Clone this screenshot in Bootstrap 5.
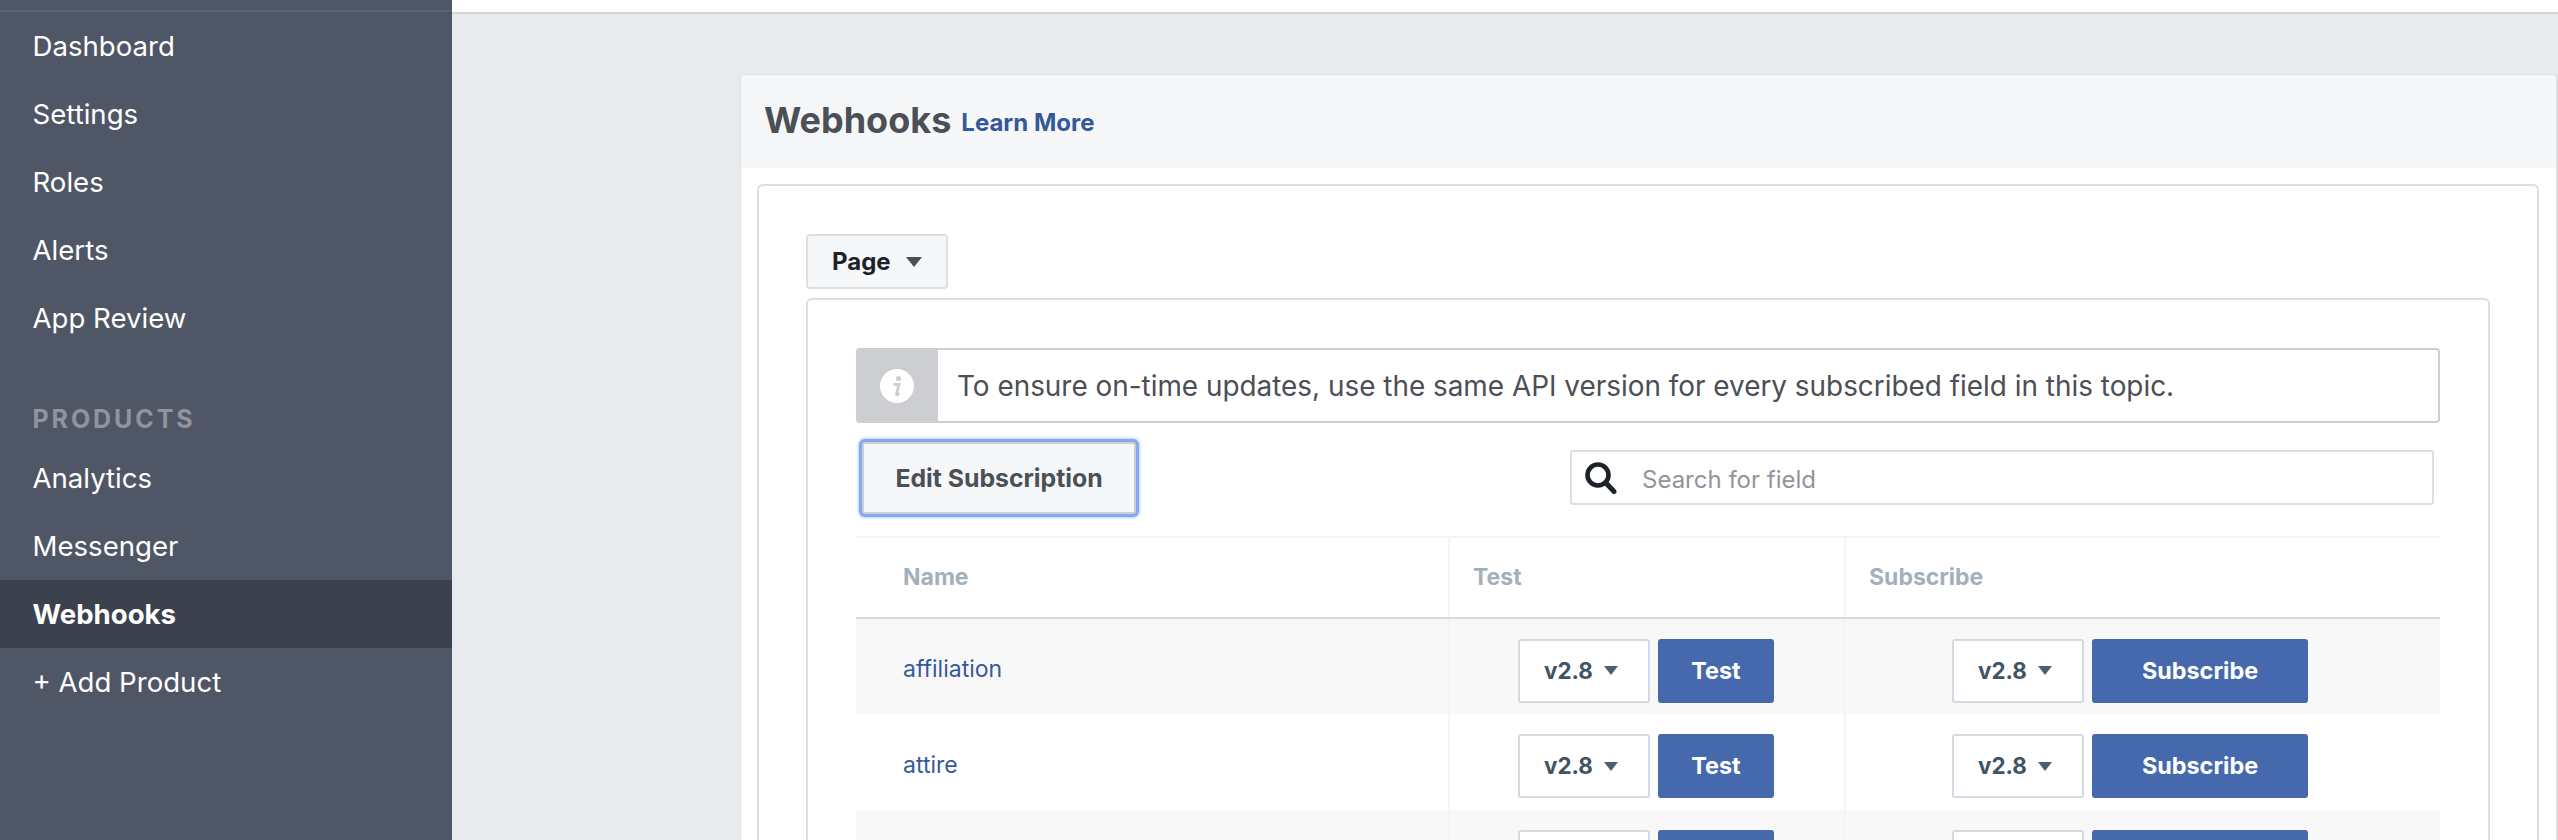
<!DOCTYPE html>
<html lang="en">

<head>
    <meta charset="UTF-8">
    <meta name="viewport" content="width=device-width, initial-scale=1.0">
    <title>Webhooks</title>
    <link href="https://cdn.jsdelivr.net/npm/bootstrap@5.3.0/dist/css/bootstrap.min.css" rel="stylesheet">
    <style>
        html, body { height: 840px; overflow: hidden; }
        body { font-family: Inter, "Liberation Sans", sans-serif; background: #e9eaed; color: #4b4f56; }
        .app-shell { height: 840px; }

        .side-nav { width: 452px; background: #4f5666; padding-top: 10px; }
        .side-nav .top-rule { height: 2px; background: #5a6172; }
        .side-nav .nav-link { height: 68px; display: flex; align-items: center; padding: 2px 0 0 32.5px; color: #fff; font-size: 27.6px; }
        .side-nav .nav-link.active { background: #3b424e; font-weight: 700; }
        .side-label { padding: 0 0 0 32.5px; margin-top: 52px; height: 40px; color: #8f949e; font-size: 25px; font-weight: 700; letter-spacing: 2.9px; line-height: 30px; }

        .top-strip { height: 14px; background: #fff; border-bottom: 2px solid #d3d5d9; }
        .main-pane { padding: 60px 0 0 288px; }

        .hook-card { height: 766px; border: 1px solid #dddfe2; border-right-width: 2px; border-bottom: 0; border-radius: 5px 5px 0 0; background: #fff; }
        .hook-head { height: 93px; padding: 0 0 0 23px; background: #f6f7f9; border-radius: 4px 4px 0 0; }
        .hook-head h1 { font-size: 36px; font-weight: 700; color: #4b4f56; margin: 0 0 2px; }
        .hook-head a { font-size: 24px; font-weight: 700; color: #365899; text-decoration: none; margin-left: 10px; padding-top: 3px; }
        .hook-body { height: 656px; margin: 16px 17px 0 16px; padding: 48px 47px 0; border: 2px solid #dddfe2; border-bottom: 0; border-radius: 6px 6px 0 0; }

        .page-btn { width: 142px; height: 55px; padding: 0 0 0 24px; display: flex; align-items: center; background: #f6f7f9; border: 2px solid #dddfe2; border-radius: 4px; color: #1d2129; font-size: 24px; font-weight: 700; }
        .page-btn.dropdown-toggle::after, .ver-btn.dropdown-toggle::after { border: 0; margin: 0; width: 0; height: 0; border-style: solid; border-color: transparent; }
        .page-btn.dropdown-toggle::after { border-width: 10px 8.5px 0; border-top-color: #4b4f56; margin-left: 15px; }

        .topic-box { height: 542px; margin-top: 9px; padding: 48px 48px 0; border: 2px solid #dddfe2; border-bottom: 0; border-radius: 6px 6px 0 0; }

        .notice-box { height: 75px; border: 2px solid #cdced2; border-radius: 4px; }
        .notice-icon { width: 82px; margin: -2px 0 -2px -2px; background: #cdced2; border-radius: 4px 0 0 4px; }
        .notice-text { padding: 2px 0 0 19px; font-size: 27.9px; color: #4b4f56; }

        .tool-row { height: 113px; padding-top: 19px; }
        .edit-btn { width: 274px; height: 72px; margin-left: 6px; background: #f6f7f9; border: 2px solid #cdced2; border-radius: 3px; box-shadow: 0 0 0 3px #84a9f4, 0 0 3px 4px #b9cffa; color: #4b4f56; font-size: 24.8px; font-weight: 700; padding: 2px 0 0; }

        .search-box { width: 864px; height: 55px; margin: 8px 6px 0 0; border: 2px solid #dddfe2; border-radius: 3px; padding: 0 0 0 13px; }
        .search-box input { width: 780px; border: 0; outline: 0; padding: 5px 0 0 25px; font-size: 24px; color: #4b4f56; background: transparent; }
        .search-box input::placeholder { color: #90949c; opacity: 1; }

        .field-table { table-layout: fixed; width: 1584px; margin: 0; color: #4b4f56; border-top: 2px solid #f4f5f6; }
        .field-table th, .field-table td { padding: 0; vertical-align: middle; border-bottom: 0; box-shadow: none; background: transparent; }
        .field-table th { height: 81px; color: #a3b0bc; font-size: 23px; font-weight: 700; border-bottom: 2px solid #d3dae1; }
        .field-table th + th, .field-table td + td { border-left: 2px solid #f4f5f6; }
        .field-table .name-col { padding-left: 47px; }
        .field-table .other-col { padding-left: 23px; }
        .field-table tbody tr { height: 96px; }
        .field-table tbody td { padding-top: 8px; }
        .field-table tbody td.test-cell { padding-right: 2px; }
        .field-table tbody tr.tinted td { background: #f8f8f8; }
        .field-table a { display: inline-block; margin-bottom: 2px; color: #365899; font-size: 23px; text-decoration: none; }

        .ver-btn { width: 132px; height: 64px; padding: 0 0 0 24px; display: flex; align-items: center; background: #fff; border: 2px solid #d3dae1; border-radius: 3px; color: #3f5465; font-size: 22.4px; font-weight: 700; }
        .ver-btn.dropdown-toggle::after { border-width: 9px 7.5px 0; border-top-color: #4c5f6e; margin-left: 11px; }
        .go-btn { height: 64px; padding: 0; background: #4669ae; border: 0; border-radius: 3px; color: #fff; font-size: 23.4px; font-weight: 700; }
        .go-test { width: 116px; }
        .go-sub { width: 216px; }
        .field-table tbody td.sub-cell { padding-left: 106px; }

        /* third row is only its first 30px on screen */
        .field-table tbody tr.cut-row { height: 30px; }
        .field-table tbody tr.cut-row td { padding-top: 20px; vertical-align: top; }
        .cut-row .ver-btn, .cut-row .go-btn { height: 10px; border-bottom: 0; border-radius: 3px 3px 0 0; }
    </style>
</head>

<body>
    <div class="app-shell d-flex">
        <nav class="side-nav flex-shrink-0">
            <div class="top-rule"></div>
            <div class="nav flex-column">
                <a class="nav-link" href="#">Dashboard</a>
                <a class="nav-link" href="#">Settings</a>
                <a class="nav-link" href="#">Roles</a>
                <a class="nav-link" href="#">Alerts</a>
                <a class="nav-link" href="#">App Review</a>
                <div class="side-label">PRODUCTS</div>
                <a class="nav-link" href="#">Analytics</a>
                <a class="nav-link" href="#">Messenger</a>
                <a class="nav-link active" href="#">Webhooks</a>
                <a class="nav-link" href="#">+ Add Product</a>
            </div>
        </nav>

        <div class="flex-grow-1">
            <div class="top-strip"></div>
            <div class="main-pane">
                <div class="hook-card">
                    <div class="hook-head d-flex align-items-center">
                        <h1>Webhooks</h1>
                        <a href="#">Learn More</a>
                    </div>
                    <div class="hook-body">
                        <button class="page-btn dropdown-toggle" type="button">Page</button>
                        <div class="topic-box">
                            <div class="notice-box d-flex align-items-stretch">
                                <div class="notice-icon d-flex align-items-center justify-content-center">
                                    <svg width="34" height="34" viewBox="0 0 34 34">
                                        <circle cx="17" cy="17" r="17" fill="#fff"/>
                                        <circle cx="18.5" cy="9.5" r="2.6" fill="#cdced2"/>
                                        <path d="M13.5 15.5h5.5l-2.6 9.5c-.2.8.6 1 1.2.6l1.7-1.2" fill="none" stroke="#cdced2" stroke-width="2.8"/>
                                    </svg>
                                </div>
                                <div class="notice-text d-flex align-items-center">To ensure on-time updates, use the same API version for every subscribed field in this topic.</div>
                            </div>

                            <div class="tool-row d-flex justify-content-between align-items-start">
                                <button class="edit-btn" type="button">Edit Subscription</button>
                                <div class="search-box d-flex align-items-center">
                                    <svg width="32" height="32" viewBox="0 0 32 32" class="flex-shrink-0">
                                        <circle cx="13" cy="13" r="10.5" fill="none" stroke="#1d2129" stroke-width="4.6"/>
                                        <path d="M20.5 20.5l8.5 9" fill="none" stroke="#1d2129" stroke-width="5" stroke-linecap="round"/>
                                    </svg>
                                    <input type="text" placeholder="Search for field">
                                </div>
                            </div>

                            <table class="table field-table">
                                <colgroup>
                                    <col style="width: 593px">
                                    <col style="width: 396px">
                                    <col style="width: 595px">
                                </colgroup>
                                <thead>
                                    <tr>
                                        <th class="name-col">Name</th>
                                        <th class="other-col">Test</th>
                                        <th class="other-col">Subscribe</th>
                                    </tr>
                                </thead>
                                <tbody>
                                    <tr class="tinted">
                                        <td class="name-col"><a href="#">affiliation</a></td>
                                        <td class="test-cell"><div class="d-flex justify-content-center gap-2"><button class="ver-btn dropdown-toggle" type="button">v2.8</button><button class="go-btn go-test" type="button">Test</button></div></td>
                                        <td class="sub-cell"><div class="d-flex gap-2"><button class="ver-btn dropdown-toggle" type="button">v2.8</button><button class="go-btn go-sub" type="button">Subscribe</button></div></td>
                                    </tr>
                                    <tr>
                                        <td class="name-col"><a href="#">attire</a></td>
                                        <td class="test-cell"><div class="d-flex justify-content-center gap-2"><button class="ver-btn dropdown-toggle" type="button">v2.8</button><button class="go-btn go-test" type="button">Test</button></div></td>
                                        <td class="sub-cell"><div class="d-flex gap-2"><button class="ver-btn dropdown-toggle" type="button">v2.8</button><button class="go-btn go-sub" type="button">Subscribe</button></div></td>
                                    </tr>
                                    <tr class="tinted cut-row">
                                        <td></td>
                                        <td class="test-cell"><div class="d-flex justify-content-center gap-2"><button class="ver-btn" type="button"></button><button class="go-btn go-test" type="button"></button></div></td>
                                        <td class="sub-cell"><div class="d-flex gap-2"><button class="ver-btn" type="button"></button><button class="go-btn go-sub" type="button"></button></div></td>
                                    </tr>
                                </tbody>
                            </table>
                        </div>
                    </div>
                </div>
            </div>
        </div>
    </div>

    <script src="https://cdn.jsdelivr.net/npm/bootstrap@5.3.0/dist/js/bootstrap.bundle.min.js"></script>
</body>

</html>
